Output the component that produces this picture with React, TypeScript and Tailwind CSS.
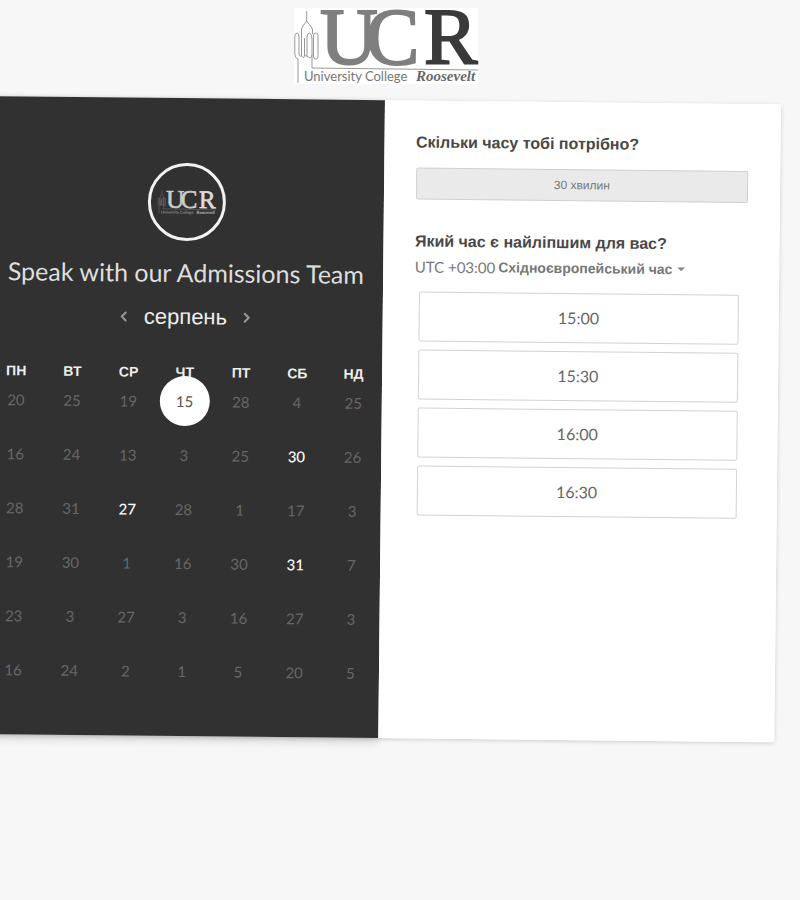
import { ChevronLeft, ChevronRight } from "lucide-react";
import { useState } from "react";

const weekdays = ["ПН", "ВТ", "СР", "ЧТ", "ПТ", "СБ", "НД"];

const weeks = [
  [20, 25, 19, 15, 28, 4, 25],
  [16, 24, 13, 3, 25, 30, 26],
  [28, 31, 27, 28, 1, 17, 3],
  [19, 30, 1, 16, 30, 31, 7],
  [23, 3, 27, 3, 16, 27, 3],
  [16, 24, 2, 1, 5, 20, 5],
];

const openDays = ["1-5", "2-2", "3-5"];
const slots = ["15:00", "15:30", "16:00", "16:30"];

function Tower({ stroke }: { stroke: string }) {
  return (
    <g fill="none" stroke={stroke} strokeWidth="1" strokeLinejoin="round">
      <path d="M12.7 3V13L9 18L7.5 21V26M12.7 13L16.5 18L18.5 21V26" />
      <path d="M4 75V51Q0.8 50 0.8 46V29Q0.8 25 3 25Q5 25 5 29V45Q5 49 7.5 48V26" />
      <path d="M7.5 48Q10.5 52 10.5 46V30M10.5 46Q11 49 13 48V29Q13 25 15.5 25Q18 26 18 31V47Q17 52 13 48" />
      <rect x="19.5" y="25" width="4.5" height="26" rx="2.2" />
      <path d="M18 47V60L184 62" />
    </g>
  );
}

function Logo() {
  return (
    <svg
      role="img"
      aria-label="University College Roosevelt"
      viewBox="0 0 184 76"
      className="h-[76px] w-[184px] overflow-visible bg-white"
    >
      <Tower stroke="#999" />
      <g className="font-['Liberation_Serif',serif]" fontSize="80">
        <text x="26" y="56" fill="#7f7f7f" stroke="#7f7f7f" strokeWidth="2">U</text>
        <text x="72" y="56" fill="#7f7f7f" stroke="#7f7f7f" strokeWidth="2">C</text>
        <text x="130" y="56" fill="#3a3a3a" stroke="#3a3a3a" strokeWidth="2">R</text>
      </g>
      <text x="10" y="73" fontSize="13" fill="#777" className="font-[Lato,sans-serif]">
        University College
      </text>
      <text
        x="122"
        y="73"
        fontSize="15"
        fill="#6a6a6a"
        className="font-['Liberation_Serif',serif] font-bold italic"
      >
        Roosevelt
      </text>
    </svg>
  );
}

function Avatar() {
  return (
    <div className="flex size-[78px] items-center justify-center rounded-full border-3 border-[#f2f2f2]">
      <svg viewBox="0 0 184 76" aria-hidden="true" className="h-6 w-[58px] overflow-visible">
        <Tower stroke="#999" />
        <g className="font-['Liberation_Serif',serif]" fontSize="80">
          <text x="26" y="56" fill="#ccc" stroke="#ccc" strokeWidth="2">U</text>
          <text x="72" y="56" fill="#ccc" stroke="#ccc" strokeWidth="2">C</text>
          <text x="130" y="56" fill="#ddd" stroke="#ddd" strokeWidth="2">R</text>
        </g>
        <text x="10" y="75" fontSize="13" fill="#aaa" className="font-[Lato,sans-serif]">
          University College
        </text>
        <text
          x="122"
          y="75"
          fontSize="15"
          fill="#bbb"
          className="font-['Liberation_Serif',serif] font-bold italic"
        >
          Roosevelt
        </text>
      </svg>
    </div>
  );
}

function Calendar() {
  const [selected, setSelected] = useState("0-3");

  const tone = (key: string) => {
    if (key === selected) return "bg-white text-[#555]";
    if (openDays.includes(key)) return "font-medium text-white";
    return "text-[#676767]";
  };

  return (
    <table className="mt-[27px] block w-full">
      <thead className="-mb-3 block">
        <tr className="grid grid-cols-7">
          {weekdays.map((day) => (
            <th
              key={day}
              scope="col"
              className="h-7 text-center font-['Liberation_Sans',sans-serif] text-sm leading-7 font-bold text-[#eee]"
            >
              {day}
            </th>
          ))}
        </tr>
      </thead>
      <tbody className="relative block">
        {weeks.map((week, row) => (
          <tr key={row} className="grid grid-cols-7">
            {week.map((day, col) => {
              const key = `${row}-${col}`;
              return (
                <td key={key} className="flex h-[54px] items-center justify-center">
                  <button
                    type="button"
                    onClick={() => setSelected(key)}
                    className={`size-[50px] rounded-full text-[15px] ${tone(key)}`}
                  >
                    {day}
                  </button>
                </td>
              );
            })}
          </tr>
        ))}
      </tbody>
    </table>
  );
}

export default function App() {
  return (
    <div className="min-h-screen overflow-hidden bg-[#f7f7f7] font-[Lato,'Liberation_Sans',sans-serif]">
      <header className="-ml-7 flex justify-center pt-2 pb-3">
        <Logo />
      </header>

      <main className="mr-[19px] -ml-3 grid origin-top-left rotate-[0.6deg] grid-cols-2 rounded-sm bg-white shadow-[0_1px_4px_rgba(0,0,0,0.18)]">
        <section className="flex flex-col items-center bg-[#313131] pt-[65px] pb-[38px] pl-[3px] shadow-[0_4px_10px_rgba(0,0,0,0.15)]">
          <Avatar />
          <h1 className="mt-[15px] text-[25px] leading-8 whitespace-nowrap text-[#dedede]">
            Speak with our Admissions Team
          </h1>
          <div className="mt-[15px] flex h-7 items-center gap-3 text-[#eee]">
            <button type="button" aria-label="Попередній місяць" className="text-[#999]">
              <ChevronLeft className="size-4" strokeWidth={3} />
            </button>
            <h2 className="font-['Liberation_Sans',sans-serif] text-[22px] leading-7">серпень</h2>
            <button type="button" aria-label="Наступний місяць" className="text-[#999]">
              <ChevronRight className="size-4" strokeWidth={3} />
            </button>
          </div>
          <Calendar />
        </section>

        <section className="bg-white px-8 pt-[30px]">
          <h2 className="font-['Liberation_Sans',sans-serif] text-base font-bold text-[#484848]">
            Скільки часу тобі потрібно?
          </h2>
          <button
            type="button"
            className="mt-[13px] block h-8 w-full rounded-xs border border-[#d0d0d0] bg-[#eaeaea] font-['Liberation_Sans',sans-serif] text-xs text-[#777]"
          >
            30 хвилин
          </button>

          <h2 className="mt-[30px] font-['Liberation_Sans',sans-serif] text-base font-bold text-[#484848]">
            Який час є найліпшим для вас?
          </h2>
          <div className="mt-[3px] flex h-5 items-center gap-[3px] text-[#777]">
            <label htmlFor="timezone" className="text-[15px]">
              UTC +03:00
            </label>
            <select
              id="timezone"
              className="field-sizing-content appearance-none bg-transparent font-['Liberation_Sans',sans-serif] text-sm font-bold"
            >
              <option>Східноєвропейський час</option>
            </select>
            <svg viewBox="0 0 8 4" aria-hidden="true" className="ml-0.5 h-1 w-2 fill-[#888]">
              <path d="M0 0H8L4 4Z" />
            </svg>
          </div>

          <div className="mt-[15px] mr-2 ml-1 flex flex-col gap-2">
            {slots.map((slot) => (
              <button
                key={slot}
                type="button"
                className="h-[50px] rounded-xs border border-[#d3d3d3] bg-white text-base text-[#666]"
              >
                {slot}
              </button>
            ))}
          </div>
        </section>
      </main>
    </div>
  );
}
